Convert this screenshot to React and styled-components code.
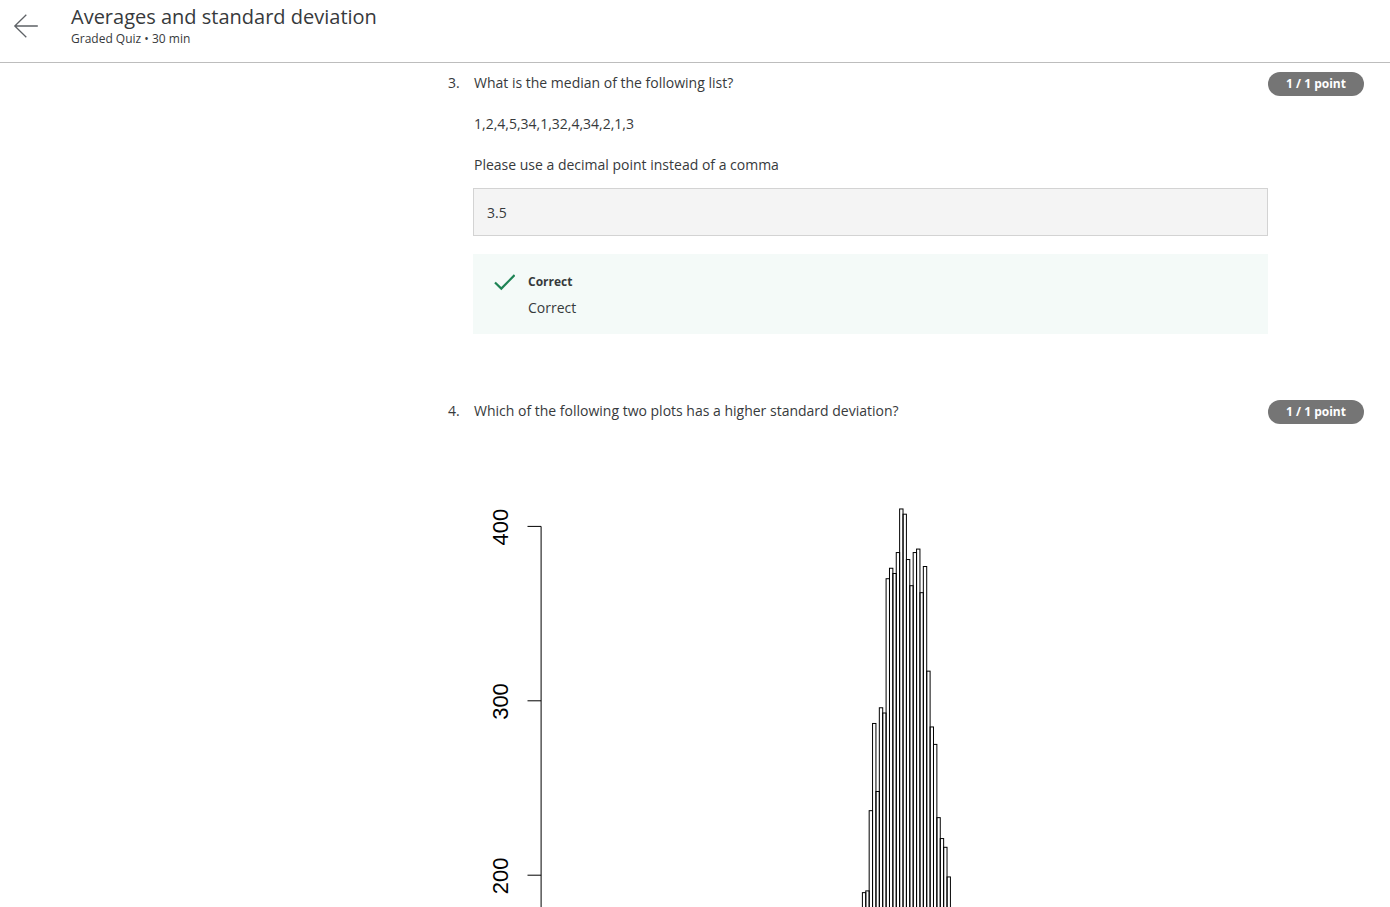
import React from "react";
import styled, { createGlobalStyle } from "styled-components";

const GlobalStyle = createGlobalStyle`
  *, *::before, *::after { box-sizing: border-box; }
  body {
    margin: 0;
    background: #fff;
    color: #373a3c;
    font-family: "Open Sans", "Liberation Sans", sans-serif;
    font-size: 14px;
    line-height: 21px;
  }
`;

const Page = styled.div`
  display: flex;
  flex-direction: column;
  height: 100vh;
  overflow: hidden;
`;

const Header = styled.header`
  display: flex;
  flex: none;
  align-items: flex-start;
  gap: 32px;
  padding: 4px 13px 14px;
  border-bottom: 1px solid #bdbdbd;
`;

const BackButton = styled.button`
  display: flex;
  margin-top: 9px;
  padding: 0;
  border: 0;
  background: none;
  color: #5e6266;
  cursor: pointer;
`;

const Heading = styled.div`
  display: flex;
  flex-direction: column;
`;

const Title = styled.h1`
  margin: 0;
  font-size: 20px;
  font-weight: 400;
  line-height: 26px;
`;

const Subtitle = styled.p`
  margin: 0;
  font-size: 12px;
  line-height: 18px;
`;

const Quiz = styled.main`
  display: flex;
  flex: 1;
  flex-direction: column;
  gap: 66px;
  min-height: 0;
  padding: 9px 26px 0 448px;
  overflow: hidden;
`;

const Question = styled.section`
  display: flex;
  flex: none;
  align-items: flex-start;
`;

const Number = styled.span`
  flex: none;
  width: 25px;
`;

const Body = styled.div`
  display: flex;
  flex: 1;
  flex-direction: column;
  min-width: 0;
`;

const Prompt = styled.label`
  display: flex;
  flex-direction: column;
  gap: 20px;
  padding-left: 1px;
`;

const Points = styled.span`
  flex: none;
  width: 96px;
  border-radius: 12px;
  background: #757575;
  color: #fff;
  font-size: 12px;
  font-weight: 700;
  line-height: 24px;
  text-align: center;
`;

const Answer = styled.input`
  width: 100%;
  height: 48px;
  margin-top: 13px;
  padding: 0 13px;
  border: 1px solid #d3d3d3;
  border-radius: 0;
  outline: 0;
  background: #f4f4f4;
  color: inherit;
  font: inherit;
`;

const Feedback = styled.div`
  display: flex;
  gap: 12px;
  height: 80px;
  margin-top: 18px;
  padding: 16px 20px;
  background: #f4faf8;
`;

const FeedbackText = styled.div`
  display: flex;
  flex-direction: column;
  gap: 4px;
  padding-left: 1px;
`;

const FeedbackTitle = styled.strong`
  font-size: 12px;
  line-height: 23px;
`;

const Plot = styled.svg`
  display: block;
  width: 100%;
  height: auto;
  margin-top: 59px;
`;

const COUNTS = [
  190, 191, 237, 287, 248, 296, 293, 370, 376, 373, 385, 410, 407, 381, 366,
  385, 387, 362, 377, 317, 285, 275, 233, 221, 216, 199,
];
const TICKS = [200, 300, 400];
const BAR_LEFT = 389.4;
const BAR_WIDTH = 3.385;
const BASELINE = 744;
const yOf = (count) => BASELINE - count * 1.744;

function Histogram() {
  return (
    <Plot viewBox="0 0 795 795" role="img" aria-label="Histogram">
      <g fill="none" stroke="#000" strokeWidth="1">
        <path d={`M68.1 ${yOf(400)}V${yOf(0)}`} />
        {TICKS.map((tick) => (
          <path key={tick} d={`M54.5 ${yOf(tick)}H68.1`} />
        ))}
        {COUNTS.map((count, i) => (
          <rect
            key={i}
            x={BAR_LEFT + i * BAR_WIDTH}
            y={yOf(count)}
            width={BAR_WIDTH}
            height={BASELINE - yOf(count)}
          />
        ))}
      </g>
      <g fontFamily="Liberation Sans, sans-serif" fontSize="22" textAnchor="middle">
        {TICKS.map((tick) => (
          <text key={tick} transform={`translate(35 ${yOf(tick) + 0.7}) rotate(-90)`}>
            {tick}
          </text>
        ))}
      </g>
    </Plot>
  );
}

export default function App() {
  return (
    <Page>
      <GlobalStyle />
      <Header>
        <BackButton type="button" aria-label="Back">
          <svg width="26" height="26" viewBox="0 0 26 26" fill="none" stroke="currentColor" strokeWidth="1.3">
            <path d="M13.3 1.8L1.8 13L13.3 24.2M1.8 13H24.8" />
          </svg>
        </BackButton>
        <Heading>
          <Title>Averages and standard deviation</Title>
          <Subtitle>Graded Quiz • 30 min</Subtitle>
        </Heading>
      </Header>
      <Quiz>
        <Question>
          <Number>3.</Number>
          <Body>
            <Prompt htmlFor="median">
              <span>What is the median of the following list?</span>
              <span>1,2,4,5,34,1,32,4,34,2,1,3</span>
              <span>Please use a decimal point instead of a comma</span>
            </Prompt>
            <Answer id="median" type="text" defaultValue="3.5" readOnly />
            <Feedback>
              <svg width="22" height="24" viewBox="0 0 22 24" fill="none" stroke="#1d8354" strokeWidth="2.2">
                <path d="M2 12.5L8.3 18.6L21.6 5.1" />
              </svg>
              <FeedbackText>
                <FeedbackTitle>Correct</FeedbackTitle>
                <span>Correct</span>
              </FeedbackText>
            </Feedback>
          </Body>
          <Points>1 / 1 point</Points>
        </Question>
        <Question>
          <Number>4.</Number>
          <Body>
            <Prompt as="div">Which of the following two plots has a higher standard deviation?</Prompt>
            <Histogram />
          </Body>
          <Points>1 / 1 point</Points>
        </Question>
      </Quiz>
    </Page>
  );
}
